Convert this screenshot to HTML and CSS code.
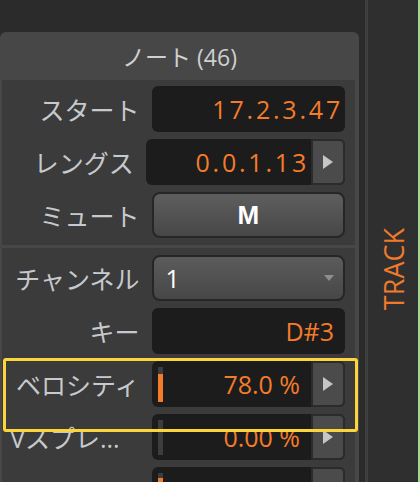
FILE: index.html
```html
<!DOCTYPE html>
<html lang="ja">
<head>
  <meta charset="UTF-8" />
  <meta name="viewport" content="width=device-width, initial-scale=1.0"/>
  <title>Note Inspector</title>
  <link rel="stylesheet" href="styles.css">
</head>
<body>
  <div class="app">
    <div class="inspector">
      <div class="panel">
        <div class="panel-title">ノート (46)</div>

        <div class="section">
          <div class="row">
            <span class="label">スタート</span>
            <div class="field"><span class="value time">17.2.3.47</span></div>
          </div>
          <div class="row row-shift">
            <span class="label">レングス</span>
            <div class="field field-wide">
              <span class="value time">0.0.1.13</span>
              <span class="step"></span>
            </div>
          </div>
          <div class="row">
            <span class="label">ミュート</span>
            <button class="toggle">M</button>
          </div>
        </div>

        <div class="section">
          <div class="row">
            <span class="label">チャンネル</span>
            <div class="select"><span>1</span><span class="caret"></span></div>
          </div>
          <div class="row">
            <span class="label">キー</span>
            <div class="field"><span class="value">D#3</span></div>
          </div>
          <div class="row">
            <span class="label">ベロシティ</span>
            <div class="field">
              <span class="meter"><span class="meter-fill" style="height: 78%"></span></span>
              <span class="value">78.0 %</span>
              <span class="step"></span>
            </div>
          </div>
          <div class="row">
            <span class="label label-clip">Vスプレ...</span>
            <div class="field">
              <span class="meter"><span class="meter-fill" style="height: 0%"></span></span>
              <span class="value">0.00 %</span>
              <span class="step"></span>
            </div>
          </div>
          <div class="row">
            <span class="label"></span>
            <div class="field">
              <span class="meter"><span class="meter-fill" style="height: 84%"></span></span>
              <span class="value"></span>
              <span class="step"></span>
            </div>
          </div>
        </div>

        <div class="highlight"></div>
      </div>
    </div>

    <div class="side">
      <div class="side-line"></div>
      <div class="side-tab"><span>TRACK</span></div>
      <div class="side-edge"></div>
    </div>
  </div>
</body>
</html>
```

FILE: styles.css
```css
body { margin: 0; height: 482px; overflow: hidden; background: #2b2b2b; font-family: "Open Sans", "Noto Sans CJK JP", sans-serif; }
.app { display: flex; height: 100%; }

.inspector { width: 359px; padding-top: 32px; box-sizing: border-box; }
.panel { position: relative; height: 100%; background: #474747; border-radius: 6px 6px 0 0; }
.panel-title { height: 48px; display: flex; align-items: center; justify-content: center; color: #cfd0d2; font-size: 23px; }

.section { display: flex; flex-direction: column; gap: 7px; margin: 0 4px 3px 2px; padding: 6px 10px 7px 0; background: #3b3b3b; }
.section + .section { padding-top: 7px; }

.row { display: flex; align-items: center; gap: 12px; height: 46px; }
.row-shift { margin-left: -5px; }
.label { width: 138px; padding-left: 8px; box-sizing: border-box; text-align: right; font-size: 25px; color: #c6c9cd; white-space: nowrap; overflow: hidden; }
.label-clip { text-align: left; }

.field { display: flex; align-items: center; width: 194px; height: 46px; background: #1c1c1c; border-radius: 6px; box-sizing: border-box; }
.field-wide { width: 201px; }
.value { flex: 1; text-align: right; padding-right: 11px; color: #f47b2a; font-size: 25px; white-space: nowrap; }
.value.time { padding-right: 2px; letter-spacing: 2.8px; }

.step { width: 34px; height: 46px; display: flex; align-items: center; justify-content: center; background: #4b4b4b; border: 2px solid #2b2b2b; border-radius: 0 6px 6px 0; box-sizing: border-box; }
.step::before { content: ""; border-left: 10px solid #c6c6c6; border-top: 7px solid transparent; border-bottom: 7px solid transparent; }

.meter { display: flex; align-items: flex-end; width: 5px; height: 35px; margin-left: 6px; background: #3d3d3d; }
.meter-fill { width: 100%; background: #f47b2a; }

.toggle { width: 194px; height: 46px; padding: 0; border: 2px solid #262626; border-radius: 8px; background: linear-gradient(#5e5e5e, #474747); color: #fff; font: bold 26px "Liberation Sans", sans-serif; }

.select { display: flex; align-items: center; justify-content: space-between; width: 194px; height: 46px; padding: 0 9px 0 12px; box-sizing: border-box; border: 2px solid #262626; border-radius: 8px; background: linear-gradient(#5c5c5c, #474747); color: #fff; font-size: 25px; }
.caret { border-top: 6px solid #8e8e8e; border-left: 5px solid transparent; border-right: 5px solid transparent; }

.highlight { position: absolute; left: 3px; top: 326px; width: 355px; height: 74px; border: 3px solid #fcd53a; border-radius: 3px; box-sizing: border-box; pointer-events: none; }

.side { display: flex; margin-left: 6px; }
.side-line { width: 3px; background: #3f3f3f; }
.side-tab { display: flex; justify-content: center; width: 50px; padding-top: 228px; box-sizing: border-box; background: #2f2f2f; }
.side-tab span { align-self: flex-start; writing-mode: vertical-rl; transform: rotate(180deg); color: #f07a2c; font-size: 27px; }
.side-edge { width: 2px; background: #a4d78e; }
```
